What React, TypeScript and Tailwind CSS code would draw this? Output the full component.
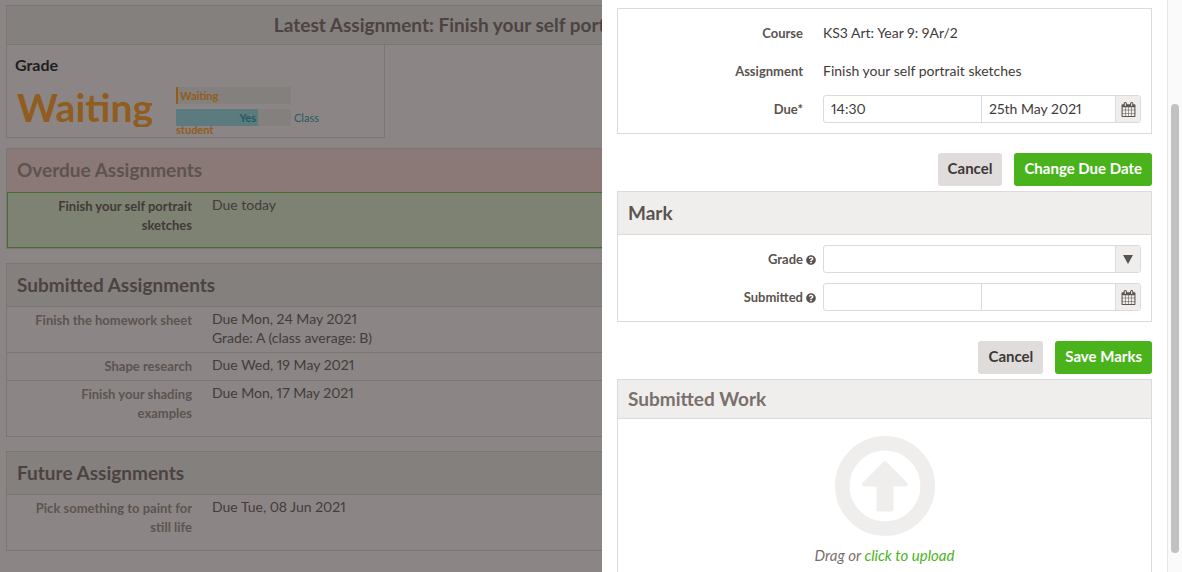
import type { ReactNode } from "react";
import { FaQuestionCircle } from "react-icons/fa";

function CalendarIcon() {
  return (
    <svg viewBox="0 0 1792 1792" className="size-[15px]" fill="currentColor" aria-hidden="true">
      <path d="M192 1664h288v-288h-288v288zm352 0h320v-288h-320v288zm-352-352h288v-320h-288v320zm352 0h320v-320h-320v320zm-352-384h288v-288h-288v288zm736 736h320v-288h-320v288zm-384-736h320v-288h-320v288zm768 736h288v-288h-288v288zm-384-352h320v-320h-320v320zm-352-864v-288q0-13-9.500-22.500t-22.500-9.500h-64q-13 0-22.500 9.500t-9.500 22.500v288q0 13 9.500 22.500t22.500 9.500h64q13 0 22.500-9.500t9.500-22.500zm736 864h288v-320h-288v320zm-384-384h320v-288h-320v288zm384 0h288v-288h-288v288zm32-480v-288q0-13-9.500-22.500t-22.500-9.500h-64q-13 0-22.500 9.500t-9.500 22.500v288q0 13 9.500 22.500t22.500 9.500h64q13 0 22.500-9.500t9.500-22.500zm384-64v1280q0 52-38 90t-90 38h-1408q-52 0-90-38t-38-90v-1280q0-52 38-90t90-38h128v-96q0-66 47-113t113-47h64q66 0 113 47t47 113v96h384v-96q0-66 47-113t113-47h64q66 0 113 47t47 113v96h128q52 0 90 38t38 90z" />
    </svg>
  );
}

function ListPanel({ title, tone = "", children }: { title: string; tone?: string; children: ReactNode }) {
  return (
    <section className="mb-[14px] border border-[#7b7674]">
      <h2 className={`flex items-center px-[10px] text-[19px] font-bold ${tone || "h-[42px] bg-[#84807e] text-[#4c4341]"}`}>
        {title}
      </h2>
      {children}
    </section>
  );
}

function Item({ name, lines, due = false, last = false }: { name: string; lines: string[]; due?: boolean; last?: boolean }) {
  const frame = due
    ? "border border-[#44702f] bg-[#7d8272] pb-3"
    : last
      ? "border-t border-[#7b7674] pb-[13px]"
      : "border-t border-[#7b7674] pb-1";
  return (
    <div className={`flex gap-5 pt-[2px] text-[14px] leading-[19px] ${frame}`}>
      <div className={`shrink-0 pt-[2px] pl-5 text-right text-[13px] font-bold ${due ? "w-[184px] text-[#423a38]" : "w-[185px] text-[#5d5350]"}`}>
        {name}
      </div>
      <div className="pb-px text-[#423c3b]">
        {lines.map((line) => (
          <p key={line}>{line}</p>
        ))}
      </div>
    </div>
  );
}

function Background() {
  return (
    <main className="min-h-screen w-[980px] pt-[5px] pl-[6px]">
      <section className="mb-[10px]">
        <h1 className="flex h-[40px] items-center justify-center border border-[#7b7674] bg-[#84807e] text-[19px] font-bold text-[#4c4341]">
          Latest Assignment: Finish your self portrait sketches
        </h1>
        <div className="h-[93px] w-[379px] border border-t-0 border-[#7b7674] px-2 pt-[10px]">
          <h3 className="text-[16px] leading-[20px] font-bold text-[#211e1e]">Grade</h3>
          <div className="flex gap-6 pt-[8px]">
            <div className="h-[44px] w-[137px] overflow-hidden pl-[2px] text-[39px] leading-[48px] font-bold text-[#905c20]">
              Waiting
            </div>
            <div className="flex flex-col gap-[5px] pt-[4px] text-[11px] leading-[17px] font-bold">
              <div className="h-[17px] w-[115px] bg-[#84807e] text-[#905c20]">
                <span className="mr-[2px] inline-block h-[17px] w-[2px] bg-[#905c20] align-top" />
                Waiting
                <br />
                for
                <br />
                student
              </div>
              <div className="relative flex gap-[3px]">
                <div className="w-[115px] bg-[#84807e]">
                  <div className="w-[82px] bg-[#5c7b7e] pr-[2px] text-right text-[#1f5a62]">Yes</div>
                </div>
                <span className="font-normal text-[#1f5a62]">Class</span>
              </div>
            </div>
          </div>
        </div>
      </section>
      <ListPanel title="Overdue Assignments" tone="h-[43px] bg-[#8b7977] text-[#5d5350]">
        <Item name="Finish your self portrait sketches" lines={["Due today"]} due />
      </ListPanel>
      <ListPanel title="Submitted Assignments">
        <Item name="Finish the homework sheet" lines={["Due Mon, 24 May 2021", "Grade: A (class average: B)"]} />
        <Item name="Shape research" lines={["Due Wed, 19 May 2021"]} />
        <Item name="Finish your shading examples" lines={["Due Mon, 17 May 2021"]} last />
      </ListPanel>
      <ListPanel title="Future Assignments">
        <Item name="Pick something to paint for still life" lines={["Due Tue, 08 Jun 2021"]} last />
      </ListPanel>
    </main>
  );
}

function Field({ label, htmlFor, help = false, children }: { label: string; htmlFor?: string; help?: boolean; children: ReactNode }) {
  const Label = htmlFor ? "label" : "span";
  return (
    <div className="flex h-7 items-center">
      <Label htmlFor={htmlFor} className="w-[185px] shrink-0 pt-[2px] text-right text-[13px] font-bold text-[#5b534f]">
        {label}
      </Label>
      <span className="flex w-5 shrink-0 pt-[2px] pl-[3px] text-[#5b534f]">{help && <FaQuestionCircle className="size-[10px]" />}</span>
      {children}
    </div>
  );
}

function DateTime({ id, name, time = "", date = "" }: { id: string; name: string; time?: string; date?: string }) {
  return (
    <div className="flex h-7 min-w-0 flex-1 overflow-hidden rounded-[3px] border border-[#dcdadb]">
      <input id={id} aria-label={`${name} time`} defaultValue={time} className="h-full min-w-0 flex-1 px-[7px] pb-px outline-none" />
      <input
        aria-label={`${name} date`}
        defaultValue={date}
        className="h-full w-[134px] min-w-0 border-l border-[#dcdadb] px-[7px] pb-px outline-none"
      />
      <button
        type="button"
        aria-label="Open calendar"
        className="flex w-[25px] shrink-0 items-center justify-center border-l border-[#dcdadb] bg-[#efeeec] text-[#5b534f]"
      >
        <CalendarIcon />
      </button>
    </div>
  );
}

function Actions({ submit }: { submit: string }) {
  return (
    <div className="mt-[19px] mb-[5px] flex h-[33px] justify-end gap-3 text-[15px] font-bold">
      <button type="button" className="rounded-[3px] bg-[#e0dcdc] px-[10px] pb-[2px] text-[#3c3836]">
        Cancel
      </button>
      <button type="button" className="rounded-[3px] bg-[#4ab31c] px-[10px] pb-[2px] text-white">
        {submit}
      </button>
    </div>
  );
}

function Drawer() {
  return (
    <aside className="fixed inset-y-0 right-0 flex w-[580px] max-w-full overflow-hidden bg-white text-[14px] text-[#3f3b3a]">
      <div className="min-w-0 flex-1 px-[15px] pt-2">
        <section className="flex flex-col gap-[10px] border border-[#dcdadb] p-[10px] pl-0">
          <Field label="Course">
            <span className="pb-px">KS3 Art: Year 9: 9Ar/2</span>
          </Field>
          <Field label="Assignment">
            <span className="pb-px">Finish your self portrait sketches</span>
          </Field>
          <Field label="Due*" htmlFor="due">
            <DateTime id="due" name="Due" time="14:30" date="25th May 2021" />
          </Field>
        </section>
        <Actions submit="Change Due Date" />
        <section className="border border-[#dcdadb]">
          <h2 className="flex h-[43px] items-center border-b border-[#dcdadb] bg-[#efeeec] px-[10px] text-[19px] font-bold text-[#5b534f]">
            Mark
          </h2>
          <div className="flex flex-col gap-[10px] p-[10px] pl-0">
            <Field label="Grade" htmlFor="grade" help>
              <div className="grid h-7 min-w-0 flex-1 grid-cols-[1fr_25px] overflow-hidden rounded-[3px] border border-[#dcdadb]">
                <select id="grade" className="col-span-2 col-start-1 row-start-1 appearance-none px-[7px] outline-none" defaultValue="">
                  <option value=""></option>
                </select>
                <span className="pointer-events-none col-start-2 row-start-1 flex items-center justify-center border-l border-[#dcdadb] bg-[#efeeec] text-[#5b534f]">
                  <svg viewBox="0 0 10 9" className="h-[9px] w-[10px]" fill="currentColor" aria-hidden="true">
                    <path d="M0 0h10L5 9z" />
                  </svg>
                </span>
              </div>
            </Field>
            <Field label="Submitted" htmlFor="submitted" help>
              <DateTime id="submitted" name="Submitted" />
            </Field>
          </div>
        </section>
        <Actions submit="Save Marks" />
        <section className="border border-[#dcdadb]">
          <h2 className="flex h-[39px] items-center border-b border-[#dcdadb] bg-[#efeeec] px-[10px] text-[19px] font-bold text-[#7a706b]">
            Submitted Work
          </h2>
          <div className="flex flex-col items-center pt-[17px] pb-10">
            <svg viewBox="0 0 100 100" className="size-[100px] text-[#efeeec]" fill="currentColor" aria-hidden="true">
              <circle cx="50" cy="50" r="42.700" fill="none" stroke="currentColor" strokeWidth="14.600" />
              <path d="M47.800 26.500Q50 24 52.200 26.500L72 46.500Q74.500 50.200 70.500 50.500H58.500V73.500Q58.500 75.500 56.500 75.500H43.500Q41.500 75.500 41.500 73.500V50.500H29.500Q25.500 50.200 28 46.500Z" />
            </svg>
            <p className="mt-[8px] text-[15px] leading-[22px] text-[#7a706b] italic">
              Drag or <a href="#upload" className="text-[#4ab31c]">click to upload</a>
            </p>
          </div>
        </section>
      </div>
      <div className="w-[15px] shrink-0 border-l border-[#e6e6e6] bg-[#fafafa] pt-[104px] pl-[3px]" aria-hidden="true">
        <div className="h-[449px] w-2 rounded-full bg-[#c1c1c1]" />
      </div>
    </aside>
  );
}

export default function App() {
  return (
    <div className="h-screen overflow-hidden bg-[#8b8685] font-['Lato',sans-serif] proportional-nums">
      <Background />
      <Drawer />
    </div>
  );
}
